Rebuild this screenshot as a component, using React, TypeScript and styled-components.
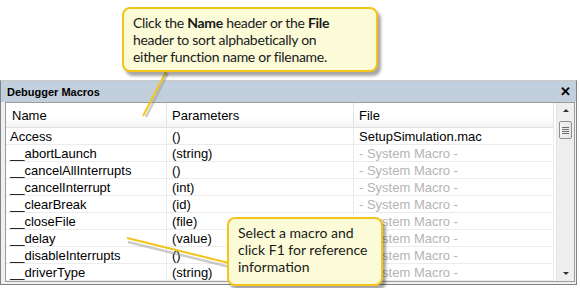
import React from "react";
import styled, { createGlobalStyle } from "styled-components";

const GlobalStyle = createGlobalStyle`
  html, body {
    margin: 0;
    padding: 0;
    background: #fff;
  }
  #root {
    width: 580px;
    height: 288px;
    position: relative;
    overflow: hidden;
  }
`;

const Page = styled.div`
  width: 580px;
  height: 288px;
  padding-top: 80px;
  box-sizing: border-box;
  position: relative;
`;

const Panel = styled.div`
  width: 577px;
  border: 1px solid #7f8389;
  border-top-color: #c9c9c9;
  box-sizing: border-box;
  background: #f0f0f0;
`;

const TitleBar = styled.div`
  height: 21px;
  background: #c2cfdc;
  display: flex;
  align-items: center;
  justify-content: space-between;
  padding: 0 5px 0 6px;
  font-family: "Liberation Sans", Arial, sans-serif;
  font-weight: bold;
  font-size: 11px;
  color: #000;
`;

const Close = styled.span`
  font-size: 13px;
  font-weight: bold;
`;

const Body = styled.div`
  padding: 0 1px 2px 4px;
`;

const List = styled.div`
  display: flex;
  border: 1px solid #9c9c9c;
  background: #fff;
`;

const Grid = styled.div`
  flex: 1;
  display: grid;
  grid-template-columns: 161px 187px 1fr;
  grid-template-rows: 25px;
  grid-auto-rows: 17px;
  font-family: "Liberation Sans", Arial, sans-serif;
  font-size: 13px;
`;

const HeadCell = styled.div<{ $pad: number }>`
  display: flex;
  align-items: center;
  padding-left: ${(p) => p.$pad}px;
  background: linear-gradient(#ffffff 0%, #ffffff 55%, #f3f4f5 100%);
  border-right: 1px solid #e3e4e6;
  border-bottom: 1px solid #e0e0e0;
  color: #000;
  box-sizing: border-box;
`;

const Cell = styled.div<{ $muted?: boolean; $pad: number }>`
  display: flex;
  align-items: center;
  padding-left: ${(p) => p.$pad}px;
  border-right: 1px solid #ececec;
  border-bottom: 1px solid #ececec;
  color: ${(p) => (p.$muted ? "#b4b4b4" : "#000")};
  white-space: nowrap;
  box-sizing: border-box;
`;

const Scrollbar = styled.div`
  width: 17px;
  margin-left: 2px;
  background: #eeeeee;
  border-left: 1px solid #e4e4e4;
  display: flex;
  flex-direction: column;
  align-items: center;
`;

const Arrow = styled.div<{ $down?: boolean }>`
  width: 0;
  height: 0;
  margin: ${(p) => (p.$down ? "auto 0 6px" : "6px 0 0")};
  border-left: 3px solid transparent;
  border-right: 3px solid transparent;
  ${(p) =>
    p.$down ? "border-top: 3px solid #333;" : "border-bottom: 3px solid #333;"}
`;

const Thumb = styled.div`
  width: 13px;
  height: 18px;
  margin-top: 9px;
  border: 1px solid #8d9093;
  border-radius: 2px;
  box-sizing: border-box;
  background: linear-gradient(90deg, #f4f4f4, #e4e4e4);
  display: flex;
  flex-direction: column;
  align-items: center;
  justify-content: center;
  gap: 1px;
`;

const Grip = styled.div`
  width: 7px;
  height: 1px;
  background: #6d6d6d;
`;

const Callout = styled.div<{
  $x: number;
  $y: number;
  $w: number;
  $h: number;
  $tight?: boolean;
}>`
  position: absolute;
  left: ${(p) => p.$x}px;
  top: ${(p) => p.$y}px;
  width: ${(p) => p.$w}px;
  height: ${(p) => p.$h}px;
  box-sizing: border-box;
  background: #fbfbd8;
  border: 2px solid #f3c419;
  border-radius: 8px;
  box-shadow: 3px 4px 3px rgba(0, 0, 0, 0.35);
  font-family: Lato, "Open Sans", sans-serif;
  font-size: 14px;
  line-height: 17px;
  letter-spacing: ${(p) => (p.$tight ? "-0.3px" : "0")};
  color: #1a1a1a;
  padding: 5px 0 0 9px;
  z-index: 3;
`;

const Pointers = styled.svg`
  position: absolute;
  left: 0;
  top: 0;
  z-index: 2;
  pointer-events: none;
`;

const rows: [string, string, string][] = [
  ["Access", "()", "SetupSimulation.mac"],
  ["__abortLaunch", "(string)", ""],
  ["__cancelAllInterrupts", "()", ""],
  ["__cancelInterrupt", "(int)", ""],
  ["__clearBreak", "(id)", ""],
  ["__closeFile", "(file)", ""],
  ["__delay", "(value)", ""],
  ["__disableInterrupts", "()", ""],
  ["__driverType", "(string)", ""],
];

export default function App() {
  return (
    <Page>
      <GlobalStyle />
      <Panel>
        <TitleBar>
          <span>Debugger Macros</span>
          <Close>✕</Close>
        </TitleBar>
        <Body>
          <List>
            <Grid>
              <HeadCell $pad={6}>Name</HeadCell>
              <HeadCell $pad={5}>Parameters</HeadCell>
              <HeadCell $pad={5}>File</HeadCell>
              {rows.map(([name, params, file]) => (
                <React.Fragment key={name}>
                  <Cell $pad={4}>{name}</Cell>
                  <Cell $pad={5}>{params}</Cell>
                  <Cell $pad={5} $muted={!file}>
                    {file || "- System Macro -"}
                  </Cell>
                </React.Fragment>
              ))}
            </Grid>
            <Scrollbar>
              <Arrow />
              <Thumb>
                <Grip />
                <Grip />
                <Grip />
                <Grip />
              </Thumb>
              <Arrow $down />
            </Scrollbar>
          </List>
        </Body>
      </Panel>

      <Pointers width="580" height="288">
        <line x1="166" y1="72" x2="144" y2="116" stroke="#9a9a9a" strokeWidth="2.5" opacity="0.5" transform="translate(2,1)" />
        <line x1="166" y1="72" x2="143" y2="116" stroke="#f3c419" strokeWidth="2" />
        <line x1="127" y1="239" x2="229" y2="264" stroke="#9a9a9a" strokeWidth="2.5" opacity="0.5" transform="translate(1,3)" />
        <line x1="127" y1="238" x2="229" y2="263" stroke="#f3c419" strokeWidth="2" />
      </Pointers>

      <Callout $x={122} $y={7} $w={256} $h={65} $tight>
        Click the <b>Name</b> header or the <b>File</b>
        <br />
        header to sort alphabetically on
        <br />
        either function name or filename.
      </Callout>

      <Callout $x={227} $y={217} $w={156} $h={69}>
        Select a macro and
        <br />
        click F1 for reference
        <br />
        information
      </Callout>
    </Page>
  );
}
